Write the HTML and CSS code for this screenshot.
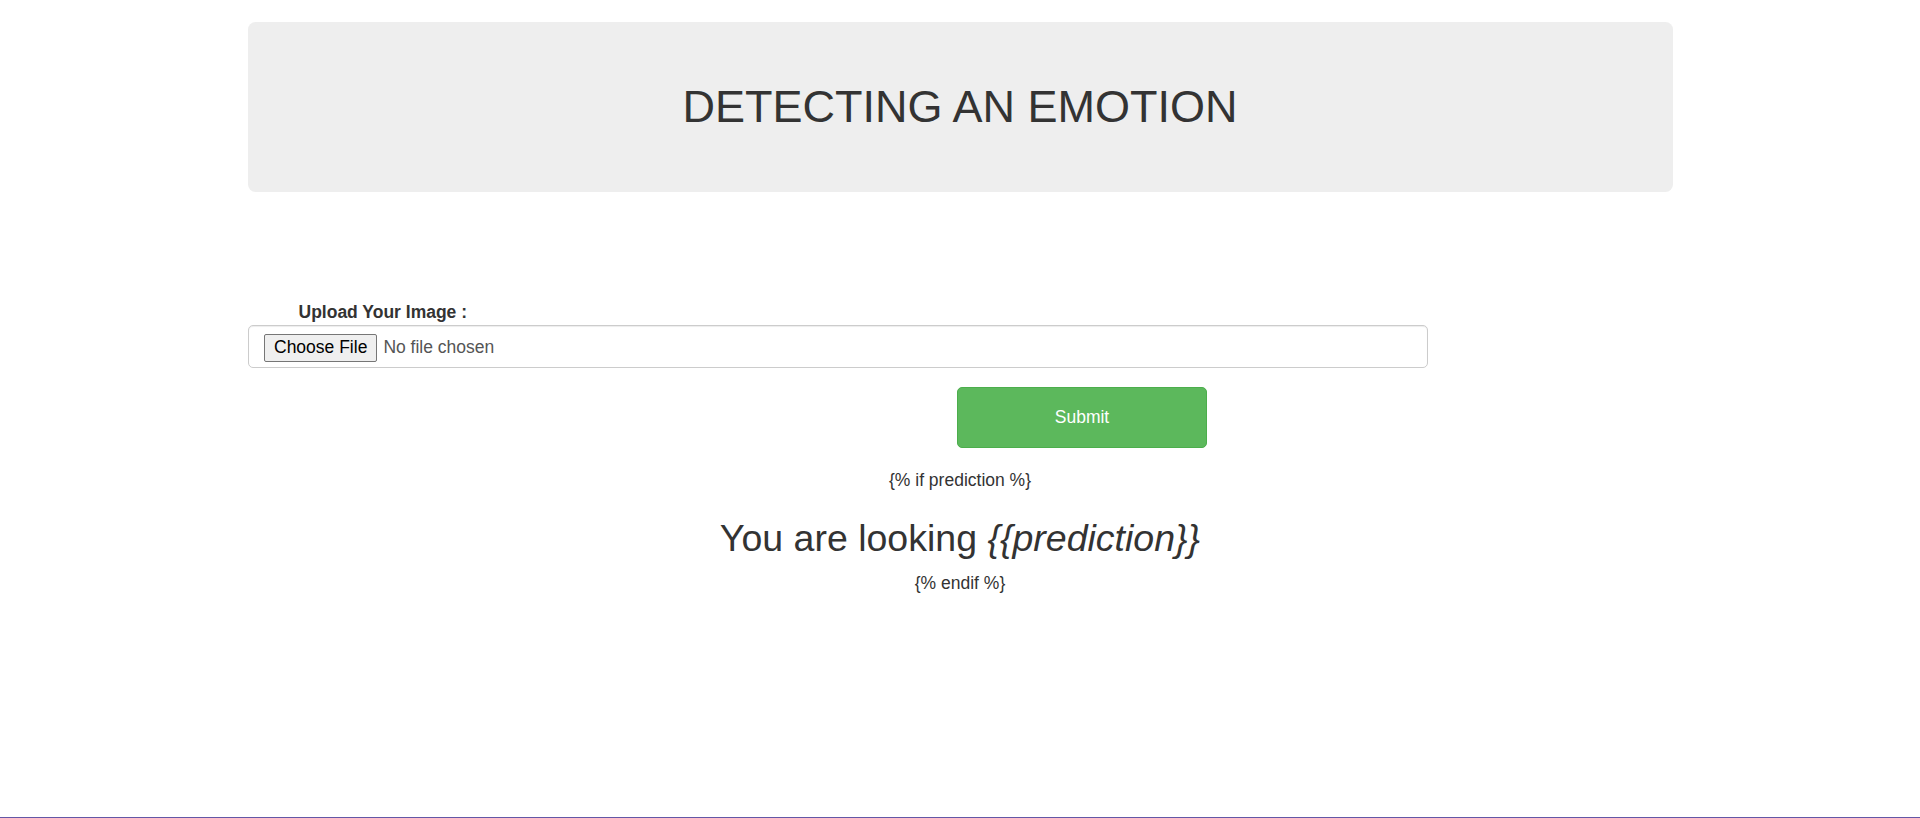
FILE: index.html
```html
<!DOCTYPE html>
<html lang="en">
<head>
<meta charset="utf-8">
<title>Detecting an Emotion</title>
<link rel="stylesheet" href="styles.css">
</head>
<body>
<div class="container">
  <div class="jumbotron">
    <h1 class="title">DETECTING AN EMOTION</h1>
  </div>
  <form class="upload-form">
    <label class="upload-label">Upload Your Image :</label>
    <div class="file-control">
      <button type="button" class="file-btn">Choose File</button>
      <span class="file-name">No file chosen</span>
    </div>
    <div class="submit-row">
      <button type="button" class="btn-submit">Submit</button>
    </div>
  </form>
  <div class="result">
    <p class="tpl">{% if prediction %}</p>
    <h2 class="result-title">You are looking <em>{{prediction}}</em></h2>
    <p class="tpl">{% endif %}</p>
  </div>
</div>
<div class="bottom-line"></div>
</body>
</html>
```
FILE: styles.css
```css
html, body {
  margin: 0;
  padding: 0;
  background: #fff;
}
body {
  font-family: "Liberation Sans", Arial, Helvetica, sans-serif;
  font-size: 17.5px;
  line-height: 25px;
  color: #333;
}
.container {
  width: 1425px;
  margin: 0 auto;
}
.jumbotron {
  margin-top: 22px;
  height: 170px;
  background: #eee;
  border-radius: 7.5px;
  display: flex;
  align-items: center;
  justify-content: center;
}
.title {
  margin: 0;
  font-size: 45px;
  font-weight: normal;
  line-height: 50px;
  color: #333;
}
.upload-form {
  margin-top: 108px;
}
.upload-label {
  display: block;
  padding-left: 51px;
  font-weight: bold;
  line-height: 25px;
}
.file-control {
  box-sizing: border-box;
  width: 1180px;
  height: 43px;
  border: 1px solid #ccc;
  border-radius: 5px;
  box-shadow: inset 0 1px 1px rgba(0,0,0,.075);
  padding: 2px 15px 0;
  display: flex;
  align-items: center;
  gap: 6px;
  margin-left: 0.5px;
}
.file-btn {
  box-sizing: border-box;
  height: 28px;
  padding: 0 9px;
  font-family: "Liberation Sans", Arial, sans-serif;
  font-size: 17.5px;
  color: #000;
  background: #efefef;
  border: 1px solid #767676;
  border-radius: 2px;
  margin: 0;
}
.file-name {
  color: #555;
}
.submit-row {
  margin-top: 19px;
  padding-left: 709.5px;
}
.btn-submit {
  box-sizing: border-box;
  width: 250px;
  height: 61px;
  background: #5cb85c;
  border: 1px solid #4cae4c;
  border-radius: 5px;
  color: #fff;
  font-family: "Liberation Sans", Arial, sans-serif;
  font-size: 17.5px;
  margin: 0;
  padding: 0;
}
.result {
  margin-top: 19.5px;
  text-align: center;
}
.tpl {
  margin: 0 0 12.5px;
}
.result-title {
  margin: 25px 0 12.5px;
  font-size: 37.5px;
  line-height: 41.25px;
  font-weight: normal;
}
.bottom-line {
  position: fixed;
  left: 0;
  right: 0;
  bottom: 0;
  height: 1px;
  background: #6457a6;
}
```
